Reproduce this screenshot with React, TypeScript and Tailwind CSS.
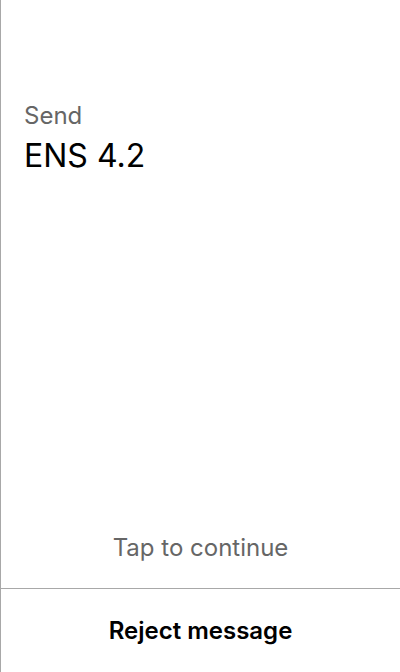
import React from "react";

const App = () => {
  return (
    <main
      className="h-[672px] w-[400px] bg-white border-l border-[#a8a8a8] flex flex-col"
      style={{ fontFamily: "Inter, 'Noto Sans', sans-serif" }}
    >
      <div className="pl-[23px] pr-6 pt-[102px] flex-1">
        <div className="text-[24px] leading-[28px] text-[#666666]">Send</div>
        <div className="text-[32px] leading-[40px] text-black mt-[6px]">ENS 4.2</div>
      </div>
      <div className="h-[80px] flex items-center justify-center text-[24px] text-[#666666]">
        Tap to continue
      </div>
      <button className="h-[84px] border-t border-[#a8a8a8] flex items-center justify-center text-[24px] font-semibold text-black">
        Reject message
      </button>
    </main>
  );
};

export default App;
